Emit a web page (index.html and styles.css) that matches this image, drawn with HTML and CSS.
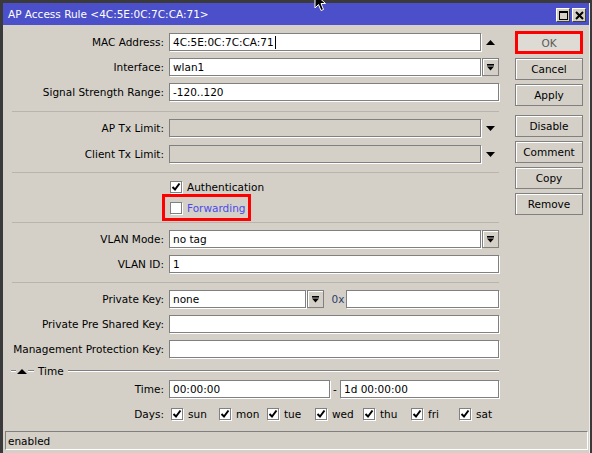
FILE: index.html
```html
<!DOCTYPE html>
<html>
<head>
<meta charset="utf-8">
<title>AP Access Rule</title>
<link rel="stylesheet" href="styles.css">
</head>
<body>
<div class="window">
  <div class="titlebar">
    <span class="title">AP Access Rule &lt;4C:5E:0C:7C:CA:71&gt;</span>
    <div class="tb-buttons">
      <span class="tb-btn"><svg width="9" height="9" viewBox="0 0 9 9"><rect x="0.5" y="0.5" width="8" height="8" fill="none" stroke="#000"/><rect x="0" y="0" width="9" height="2" fill="#000"/></svg></span>
      <span class="tb-btn"><svg width="9" height="9" viewBox="0 0 9 9"><path d="M1 1 L8 8 M8 1 L1 8" stroke="#000" stroke-width="2"/></svg></span>
    </div>
  </div>
  <div class="main">
    <div class="form">
      <div class="row mt8">
        <span class="lbl">MAC Address:</span>
        <div class="field">
          <div class="input w312">4C:5E:0C:7C:CA:71<span class="caret"></span></div>
          <span class="arrow"><svg width="9" height="5" viewBox="0 0 9 5"><polygon points="0,5 9,5 4.5,0" fill="#000"/></svg></span>
        </div>
      </div>
      <div class="row mt7">
        <span class="lbl">Interface:</span>
        <div class="field">
          <div class="input w312">wlan1</div>
          <span class="dd"><svg width="9" height="9" viewBox="0 0 9 9"><rect x="1" y="1" width="7" height="1.6" fill="#000"/><polygon points="1,3.5 8,3.5 4.5,7.5" fill="#000"/></svg></span>
        </div>
      </div>
      <div class="row mt7">
        <span class="lbl">Signal Strength Range:</span>
        <div class="field">
          <div class="input wfull">-120..120</div>
        </div>
      </div>
      <div class="sep mt10"></div>
      <div class="row mt7">
        <span class="lbl">AP Tx Limit:</span>
        <div class="field">
          <div class="input w312 disabled"></div>
          <span class="arrow"><svg width="9" height="5" viewBox="0 0 9 5"><polygon points="0,0 9,0 4.5,5" fill="#000"/></svg></span>
        </div>
      </div>
      <div class="row mt8">
        <span class="lbl">Client Tx Limit:</span>
        <div class="field">
          <div class="input w312 disabled"></div>
          <span class="arrow"><svg width="9" height="5" viewBox="0 0 9 5"><polygon points="0,0 9,0 4.5,5" fill="#000"/></svg></span>
        </div>
      </div>
      <div class="sep mt9"></div>
      <div class="row crow mt8">
        <span class="lbl"></span>
        <div class="field">
          <span class="check-item first">
            <span class="cb"><svg width="10" height="10" viewBox="0 0 10 10"><path d="M1.5 5 L4 7.5 L8.5 1.5" fill="none" stroke="#000" stroke-width="2"/></svg></span>
            <span class="cb-text">Authentication</span>
          </span>
        </div>
      </div>
      <div class="row frow mt1">
        <span class="lbl"></span>
        <div class="field">
          <span class="highlight">
            <span class="cb"></span>
            <span class="cb-text fwd">Forwarding</span>
          </span>
        </div>
      </div>
      <div class="sep mt1"></div>
      <div class="row mt7">
        <span class="lbl">VLAN Mode:</span>
        <div class="field">
          <div class="input w312">no tag</div>
          <span class="dd"><svg width="9" height="9" viewBox="0 0 9 9"><rect x="1" y="1" width="7" height="1.6" fill="#000"/><polygon points="1,3.5 8,3.5 4.5,7.5" fill="#000"/></svg></span>
        </div>
      </div>
      <div class="row mt7">
        <span class="lbl">VLAN ID:</span>
        <div class="field">
          <div class="input wfull">1</div>
        </div>
      </div>
      <div class="sep mt9"></div>
      <div class="row mt7">
        <span class="lbl">Private Key:</span>
        <div class="field">
          <div class="input w137">none</div>
          <span class="dd"><svg width="9" height="9" viewBox="0 0 9 9"><rect x="1" y="1" width="7" height="1.6" fill="#000"/><polygon points="1,3.5 8,3.5 4.5,7.5" fill="#000"/></svg></span>
          <span class="hex">0x</span>
          <div class="input w154"></div>
        </div>
      </div>
      <div class="row mt7">
        <span class="lbl">Private Pre Shared Key:</span>
        <div class="field">
          <div class="input wfull"></div>
        </div>
      </div>
      <div class="row mt7">
        <span class="lbl">Management Protection Key:</span>
        <div class="field">
          <div class="input wfull"></div>
        </div>
      </div>
      <div class="section mt6">
        <span class="sec-line s1"></span>
        <svg class="sec-tri" width="10" height="5" viewBox="0 0 10 5"><polygon points="0,5 10,5 5,0" fill="#000"/></svg>
        <span class="sec-line s2"></span>
        <span class="sec-title">Time</span>
        <span class="sec-line grow"></span>
      </div>
      <div class="row mt2">
        <span class="lbl">Time:</span>
        <div class="field">
          <div class="input w160">00:00:00</div>
          <span class="dash">-</span>
          <div class="input w159">1d 00:00:00</div>
        </div>
      </div>
      <div class="row crow mt10">
        <span class="lbl">Days:</span>
        <div class="field days">
          <span class="check-item day"><span class="cb"><svg width="10" height="10" viewBox="0 0 10 10"><path d="M1.5 5 L4 7.5 L8.5 1.5" fill="none" stroke="#000" stroke-width="2"/></svg></span><span class="cb-text">sun</span></span>
          <span class="check-item day"><span class="cb"><svg width="10" height="10" viewBox="0 0 10 10"><path d="M1.5 5 L4 7.5 L8.5 1.5" fill="none" stroke="#000" stroke-width="2"/></svg></span><span class="cb-text">mon</span></span>
          <span class="check-item day"><span class="cb"><svg width="10" height="10" viewBox="0 0 10 10"><path d="M1.5 5 L4 7.5 L8.5 1.5" fill="none" stroke="#000" stroke-width="2"/></svg></span><span class="cb-text">tue</span></span>
          <span class="check-item day"><span class="cb"><svg width="10" height="10" viewBox="0 0 10 10"><path d="M1.5 5 L4 7.5 L8.5 1.5" fill="none" stroke="#000" stroke-width="2"/></svg></span><span class="cb-text">wed</span></span>
          <span class="check-item day"><span class="cb"><svg width="10" height="10" viewBox="0 0 10 10"><path d="M1.5 5 L4 7.5 L8.5 1.5" fill="none" stroke="#000" stroke-width="2"/></svg></span><span class="cb-text">thu</span></span>
          <span class="check-item day"><span class="cb"><svg width="10" height="10" viewBox="0 0 10 10"><path d="M1.5 5 L4 7.5 L8.5 1.5" fill="none" stroke="#000" stroke-width="2"/></svg></span><span class="cb-text">fri</span></span>
          <span class="check-item day"><span class="cb"><svg width="10" height="10" viewBox="0 0 10 10"><path d="M1.5 5 L4 7.5 L8.5 1.5" fill="none" stroke="#000" stroke-width="2"/></svg></span><span class="cb-text">sat</span></span>
        </div>
      </div>
    </div>
    <div class="side">
      <div class="btn btn-ok">OK</div>
      <div class="btn mt4">Cancel</div>
      <div class="btn mt4">Apply</div>
      <div class="btn mt9">Disable</div>
      <div class="btn mt4">Comment</div>
      <div class="btn mt4">Copy</div>
      <div class="btn mt4">Remove</div>
    </div>
  </div>
  <div class="status">enabled</div>
</div>
<svg class="pointer" width="14" height="20" viewBox="0 0 14 20"><path d="M1 1 L1 15 L4.5 11.5 L7 17.5 L9.5 16.5 L7 10.5 L11.5 10.5 Z" fill="#000" stroke="#fff" stroke-width="1"/></svg>
</body>
</html>
```
FILE: styles.css
```css
html, body {
  margin: 0;
}
body {
  width: 592px;
  height: 453px;
  overflow: hidden;
  position: relative;
  box-sizing: border-box;
  padding: 3px 0 0 3px;
  background: #3a3a3a;
  font-family: "DejaVu Sans", sans-serif;
  font-size: 10.5px;
  color: #000;
}
.window {
  width: 587px;
  height: 450px;
  background: #d4d0c8;
  display: flex;
  flex-direction: column;
  box-sizing: border-box;
  border-right: 1px solid #eeece8;
}
.titlebar {
  height: 22px;
  flex: none;
  background: #4b50ca;
  color: #fff;
  display: flex;
  align-items: center;
  padding: 0 3px 0 5px;
}
.title {
  flex: 1;
  white-space: nowrap;
}
.tb-buttons {
  display: flex;
  gap: 2px;
  align-self: flex-start;
  margin-top: 5px;
}
.tb-btn {
  width: 14px;
  height: 14px;
  box-sizing: border-box;
  background: #d4d0c8;
  border: 1px solid;
  border-color: #fff #404040 #404040 #fff;
  display: flex;
  align-items: center;
  justify-content: center;
}
.main {
  flex: 1;
  display: flex;
}
.form {
  width: 505px;
  display: flex;
  flex-direction: column;
}
.row {
  display: flex;
  align-items: center;
  height: 18px;
}
.crow {
  height: 12px;
}
.frow {
  height: 27px;
}
.lbl {
  width: 157px;
  margin-left: 4px;
  margin-right: 5px;
  text-align: right;
  white-space: nowrap;
}
.field {
  width: 330px;
  display: flex;
  align-items: center;
}
.input {
  box-sizing: border-box;
  height: 18px;
  background: #fff;
  border: 1px solid #808080;
  box-shadow: 1px 1px 0 #fff;
  padding-left: 3px;
  display: flex;
  align-items: center;
  white-space: nowrap;
}
.input.disabled {
  background: #d4d0c8;
}
.w312 { width: 312px; }
.wfull { width: 330px; }
.w137 { width: 138px; }
.w154 { width: 154px; }
.w160 { width: 161px; }
.w159 { width: 159px; }
.caret {
  display: inline-block;
  width: 1px;
  height: 13px;
  background: #000;
  margin-left: 1px;
}
.arrow {
  width: 18px;
  height: 18px;
  display: flex;
  align-items: center;
  justify-content: center;
}
.dd {
  width: 17px;
  height: 18px;
  box-sizing: border-box;
  margin-left: 1px;
  border: 1px solid #808080;
  box-shadow: inset 1px 1px 0 #fff;
  display: flex;
  align-items: center;
  justify-content: center;
}
.hex {
  margin: 0 2px 0 8px;
  color: #2b3d6b;
}
.dash {
  width: 10px;
  text-align: center;
}
.sep {
  margin-left: 9px;
  width: 487px;
  height: 1px;
  background: #b9b5ae;
}
.check-item {
  display: flex;
  align-items: center;
}
.check-item.first {
  margin-left: 1px;
}
.cb {
  width: 12px;
  height: 12px;
  box-sizing: border-box;
  background: #fff;
  border: 1px solid #808080;
  box-shadow: 1px 1px 0 #fff;
  display: flex;
  align-items: center;
  justify-content: center;
  flex: none;
}
.cb-text {
  margin-left: 5px;
  white-space: nowrap;
}
.fwd {
  color: #4b4bea;
}
.highlight {
  box-sizing: border-box;
  width: 89px;
  height: 27px;
  margin-left: -7px;
  padding-left: 5px;
  border: 3px solid #f00;
  display: flex;
  align-items: center;
}
.days {
  padding-left: 2px;
}
.day {
  width: 48px;
  flex: none;
}
.section {
  display: flex;
  align-items: center;
  height: 14px;
  margin-left: 8px;
  width: 488px;
}
.sec-line {
  height: 0;
  border-top: 1px solid #808080;
  border-bottom: 1px solid #fff;
}
.s1 { width: 5px; }
.s2 { width: 6px; }
.sec-tri { margin: 0 1px; }
.sec-title { margin: 0 4px 0 4px; }
.grow { flex: 1; }
.side {
  padding-top: 6px;
  margin-left: 7px;
  width: 68px;
  display: flex;
  flex-direction: column;
}
.btn {
  box-sizing: border-box;
  width: 68px;
  height: 22px;
  border: 1px solid #808080;
  box-shadow: inset 1px 1px 0 #fff;
  display: flex;
  align-items: center;
  justify-content: center;
}
.btn-ok {
  height: 23px;
  border: 3px solid #f00;
  background: #dedbd5;
  color: #5a5a5a;
  box-shadow: none;
}
.status {
  flex: none;
  box-sizing: border-box;
  margin: 0 0 3px 2px;
  width: 583px;
  height: 19px;
  border: 1px solid;
  border-color: #808080 #fff #fff #808080;
  padding-left: 2px;
  display: flex;
  align-items: center;
}
.pointer {
  position: absolute;
  left: 314px;
  top: -7px;
}
.mt1 { margin-top: 1px; }
.mt2 { margin-top: 2px; }
.mt4 { margin-top: 4px; }
.mt6 { margin-top: 6px; }
.mt7 { margin-top: 7px; }
.mt8 { margin-top: 8px; }
.mt9 { margin-top: 9px; }
.mt10 { margin-top: 10px; }
```
